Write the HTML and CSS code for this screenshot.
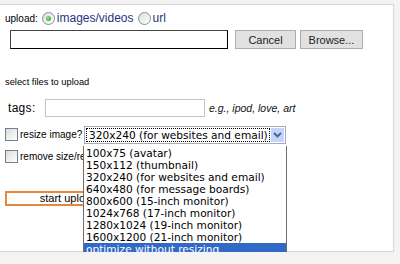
FILE: index.html
```html
<!DOCTYPE html>
<html lang="en">
<head>
  <meta charset="UTF-8">
  <title>Upload</title>
  <link rel="stylesheet" href="styles.css">
</head>
<body>
  <div class="panel">
    <div class="row source-row">
      <span class="label">upload:</span>
      <span class="radio checked"><span class="dot"></span></span>
      <span class="option">images/videos</span>
      <span class="radio"></span>
      <span class="option">url</span>
    </div>

    <div class="row file-row">
      <div class="file-input"></div>
      <button class="btn cancel">Cancel</button>
      <button class="btn browse">Browse...</button>
    </div>

    <div class="hint">select files to upload</div>

    <div class="row tags-row">
      <span class="tags-label">tags:</span>
      <div class="tags-input"></div>
      <span class="example">e.g., ipod, love, art</span>
    </div>

    <div class="row resize-row">
      <span class="checkbox"></span>
      <span class="label">resize image?</span>
      <div class="select">
        <span class="select-value">320x240 (for websites and email)</span>
        <span class="select-arrow">
          <svg width="9" height="6" viewBox="0 0 9 6"><path d="M1 1 L4.5 4.5 L8 1" fill="none" stroke="#4d6185" stroke-width="1.8"/></svg>
        </span>
      </div>
    </div>

    <div class="row remove-row">
      <span class="checkbox"></span>
      <span class="label">remove size/restrictions</span>
    </div>

    <button class="start">start upload</button>

    <ul class="dropdown">
      <li>100x75 (avatar)</li>
      <li>150x112 (thumbnail)</li>
      <li>320x240 (for websites and email)</li>
      <li>640x480 (for message boards)</li>
      <li>800x600 (15-inch monitor)</li>
      <li>1024x768 (17-inch monitor)</li>
      <li>1280x1024 (19-inch monitor)</li>
      <li>1600x1200 (21-inch monitor)</li>
      <li class="selected">optimize without resizing</li>
    </ul>
  </div>
</body>
</html>
```

FILE: styles.css
```css
body {
  margin: 0;
  background-color: #f3f3f3;
  font-family: "Liberation Sans", Arial, sans-serif;
  font-size: 10px;
  color: #000;
}
.panel {
  position: relative;
  box-sizing: border-box;
  margin-top: 4px;
  width: 394px;
  height: 248px;
  background-color: #fff;
  border: 1px solid #d9d9d9;
  border-left: none;
  padding: 6px 0 0 5px;
}
.row {
  display: flex;
  align-items: center;
}
.source-row {
  height: 14px;
}
.radio {
  box-sizing: border-box;
  display: flex;
  align-items: center;
  justify-content: center;
  width: 13px;
  height: 13px;
  border-radius: 50%;
  border: 1px solid #7f8fa8;
  background: linear-gradient(135deg, #dcdcd6, #fff);
  margin: 0 2px 0 4px;
}
.radio .dot {
  width: 5px;
  height: 5px;
  border-radius: 50%;
  background: radial-gradient(circle at 40% 40%, #8fe08f, #21a121);
}
.option {
  font-size: 12px;
  color: #1f3580;
}
.file-row {
  margin-top: 5px;
  height: 19px;
}
.file-input {
  box-sizing: border-box;
  width: 218px;
  height: 19px;
  margin-left: 5px;
  border: 1px solid #000;
  border-top-color: #444;
  border-left-color: #444;
}
.btn {
  box-sizing: border-box;
  height: 19px;
  padding: 0;
  border: 1px solid #adadad;
  background-color: #e1e1e1;
  font-family: "Liberation Sans", Arial, sans-serif;
  font-size: 11px;
  color: #222;
}
.cancel {
  width: 61px;
  margin-left: 7px;
}
.browse {
  width: 63px;
  margin-left: 4px;
}
.hint {
  margin-top: 28px;
  font-size: 9.3px;
  height: 11px;
  line-height: 11px;
}
.tags-row {
  margin-top: 11px;
  height: 18px;
}
.tags-label {
  font-size: 12px;
  margin-left: 3px;
  width: 37px;
  letter-spacing: 0.3px;
}
.tags-input {
  box-sizing: border-box;
  width: 160px;
  height: 18px;
  border: 1px solid #c3c3c3;
}
.example {
  font-style: italic;
  font-size: 10.5px;
  margin-left: 4px;
  color: #111;
}
.checkbox {
  box-sizing: border-box;
  width: 13px;
  height: 13px;
  border: 1px solid #6f7f99;
  background: linear-gradient(135deg, #dcdcd6, #fff);
  margin-right: 2px;
}
.resize-row {
  margin-top: 9px;
  height: 17px;
}
.resize-row .label {
  width: 64px;
}
.select {
  box-sizing: border-box;
  display: flex;
  align-items: center;
  width: 202px;
  height: 18px;
  border: 1px solid #a5acb5;
  padding: 1px;
}
.select-value {
  box-sizing: border-box;
  flex: 1;
  height: 14px;
  line-height: 12px;
  border: 1px dotted #000;
  padding-left: 2px;
  font-family: "DejaVu Sans", Verdana, sans-serif;
  font-size: 10.6px;
  white-space: nowrap;
  overflow: hidden;
}
.select-arrow {
  display: flex;
  align-items: center;
  justify-content: center;
  width: 13px;
  height: 14px;
  margin-left: 1px;
  background-color: #c4d3fb;
}
.remove-row {
  margin-top: 6px;
  height: 14px;
}
.start {
  box-sizing: border-box;
  display: block;
  margin-top: 28px;
  width: 127px;
  height: 15px;
  padding: 0;
  border: 2px solid #e9873a;
  background-color: #fff;
  font-family: "Liberation Sans", Arial, sans-serif;
  font-size: 11px;
  line-height: 11px;
}
.dropdown {
  position: absolute;
  left: 83px;
  top: 141px;
  width: 204px;
  box-sizing: border-box;
  margin: 0;
  padding: 1px 0 0;
  list-style: none;
  background-color: #fff;
  border: 1px solid #6e6e6e;
  border-top: none;
  font-family: "DejaVu Sans", Verdana, sans-serif;
  font-size: 10.6px;
}
.dropdown li {
  height: 12px;
  line-height: 12px;
  padding-left: 2px;
  white-space: nowrap;
  overflow: hidden;
}
.dropdown .selected {
  background-color: #3169c6;
  color: #fff;
}
```
